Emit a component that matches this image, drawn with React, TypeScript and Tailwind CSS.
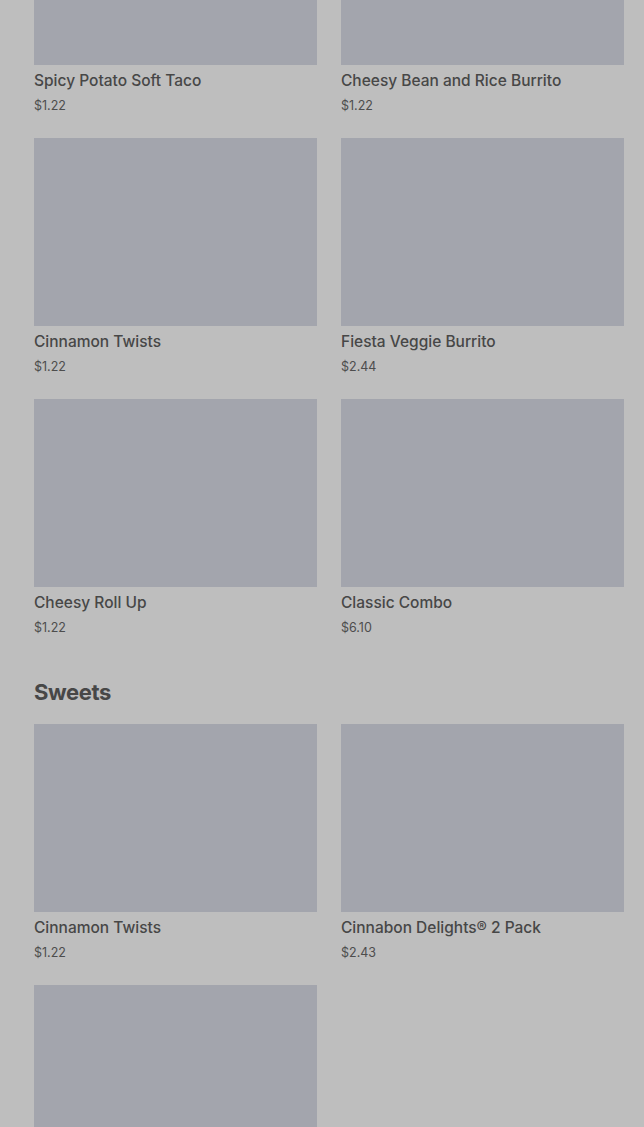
import React from "react";

type Item = { name: string; price: string };

const Card = ({ item }: { item: Item }) => (
  <div className="flex flex-col">
    <div className="h-[188px] bg-[#a3a5ad]" />
    <div className="mt-[5px] text-[15.5px] leading-[22px] text-[#474747] font-medium">{item.name}</div>
    <div className="mt-[4px] text-[12.5px] leading-[20px] text-[#4d4d4d]">{item.price}</div>
  </div>
);

const main: Item[] = [
  { name: "Spicy Potato Soft Taco", price: "$1.22" },
  { name: "Cheesy Bean and Rice Burrito", price: "$1.22" },
  { name: "Cinnamon Twists", price: "$1.22" },
  { name: "Fiesta Veggie Burrito", price: "$2.44" },
  { name: "Cheesy Roll Up", price: "$1.22" },
  { name: "Classic Combo", price: "$6.10" },
];

const sweets: Item[] = [
  { name: "Cinnamon Twists", price: "$1.22" },
  { name: "Cinnabon Delights® 2 Pack", price: "$2.43" },
];

export default function App() {
  return (
    <div className="h-[1127px] overflow-hidden bg-[#bebebe]" style={{ fontFamily: "Inter, 'Noto Sans', sans-serif" }}>
      <div className="-mt-[123px] pl-[34px] pr-[20px]">
        <div className="grid grid-cols-2 gap-x-[24px] gap-y-[22px]">
          {main.map((it, i) => (
            <Card key={i} item={it} />
          ))}
        </div>
        <h2 className="mt-[40px] text-[22px] leading-[28px] font-bold text-[#474747] tracking-[-0.4px]">Sweets</h2>
        <div className="mt-[18px] grid grid-cols-2 gap-x-[24px] gap-y-[22px]">
          {sweets.map((it, i) => (
            <Card key={i} item={it} />
          ))}
          <div className="flex flex-col">
            <div className="h-[188px] bg-[#a3a5ad]" />
          </div>
        </div>
      </div>
    </div>
  );
}
